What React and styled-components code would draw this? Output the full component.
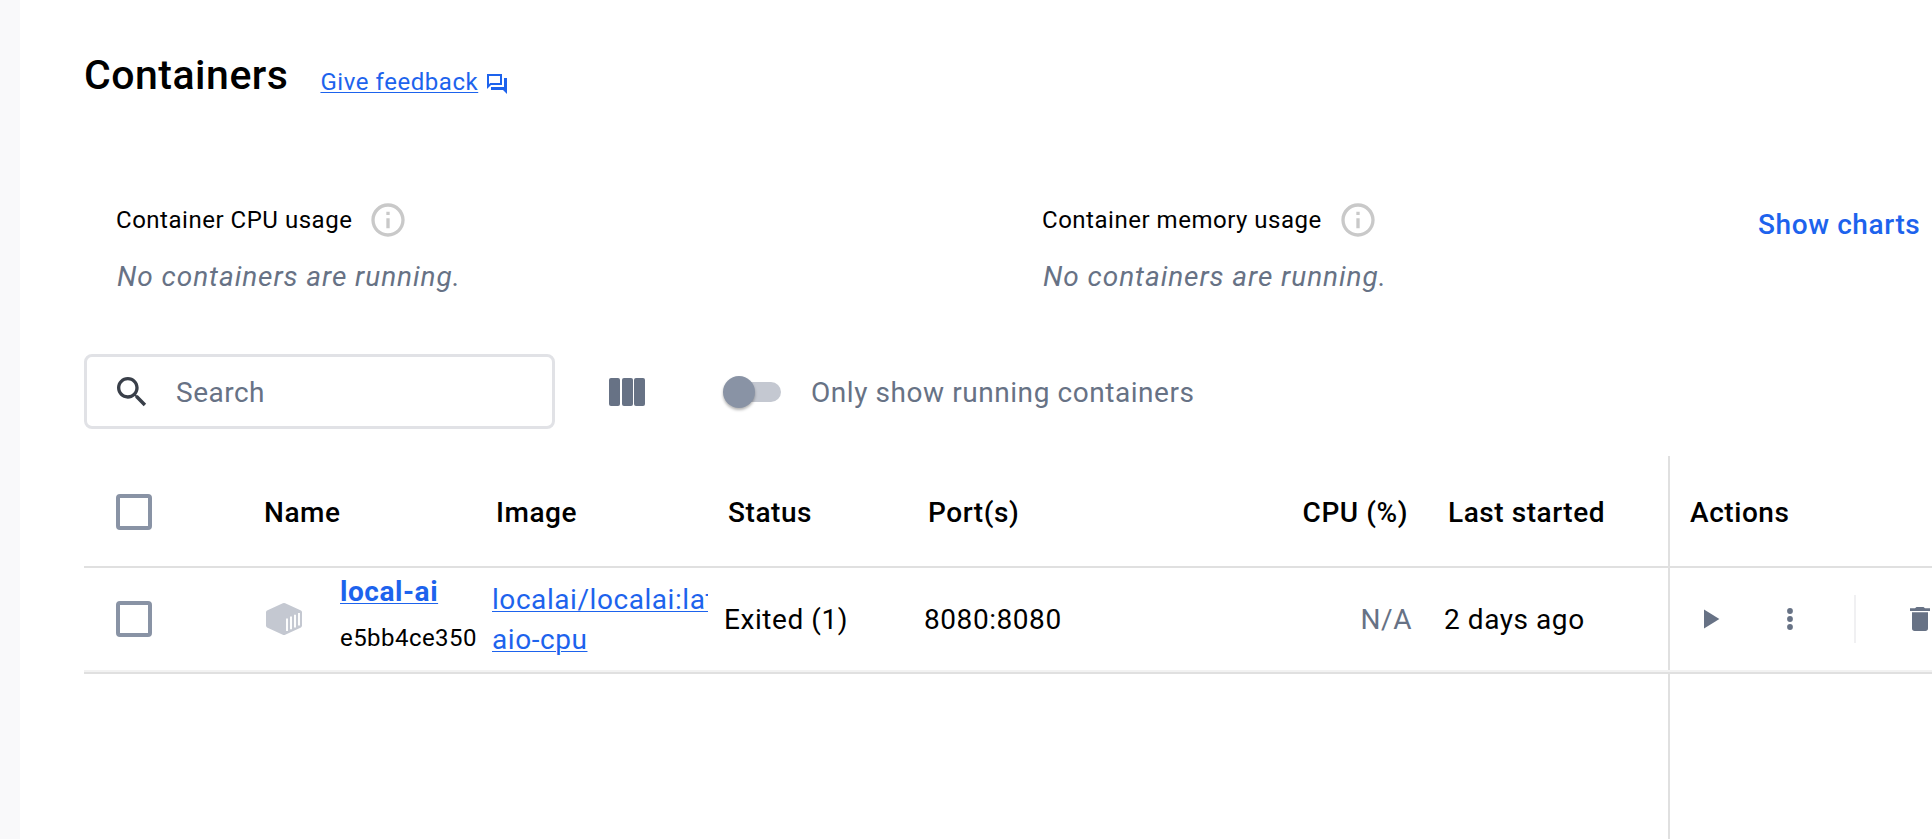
import React from "react";
import styled, { createGlobalStyle } from "styled-components";

const GlobalStyle = createGlobalStyle`
  * { box-sizing: border-box; }
  body { margin: 0; background: #fff; overflow: hidden; }
  svg { flex: none; }
`;

const Page = styled.div`
  display: flex;
  width: 1932px;
  height: 839px;
  overflow: hidden;
  font-family: Roboto, "Liberation Sans", sans-serif;
  font-size: 28px;
  line-height: 40px;
  letter-spacing: 0.56px;
  color: #000;
  background: #fff;
`;

const SideRail = styled.div`
  flex: 0 0 20px;
  background: #f9f9fa;
`;

const Main = styled.main`
  flex: 1;
  min-width: 0;
  display: flex;
  flex-direction: column;
  padding: 46px 0 0 64px;
`;

const Header = styled.header`
  display: flex;
  align-items: flex-start;
  height: 60px;
`;

const Title = styled.h1`
  margin: 0 32px 0 0;
  font-size: 41px;
  font-weight: 500;
  line-height: 58px;
  letter-spacing: 0.5px;
`;

const FeedbackLink = styled.a`
  display: flex;
  align-items: center;
  gap: 7px;
  margin-top: 16px;
  font-size: 24px;
  letter-spacing: 0.55px;
  color: #1d63ed;
  span { text-decoration: underline; text-decoration-thickness: 1px; text-underline-offset: 2px; }
  svg { margin-top: 4px; }
`;

const Stats = styled.section`
  display: flex;
  margin-top: 94px;
  padding-left: 32px;
`;

const Stat = styled.div`
  flex: 0 0 926px;
`;

const StatLabel = styled.div`
  display: flex;
  align-items: center;
  gap: 16px;
  font-size: 24px;
  letter-spacing: 0.52px;
`;

const StatValue = styled.div`
  margin-top: 17px;
  padding-left: 1px;
  font-style: italic;
  letter-spacing: 0.94px;
  color: #677285;
`;

const ChartsButton = styled.button`
  align-self: flex-start;
  margin: 5px 0 0 -210px;
  padding: 0;
  border: 0;
  background: none;
  font: inherit;
  font-weight: 500;
  letter-spacing: 0.6px;
  white-space: nowrap;
  color: #1d63ed;
`;

const Toolbar = styled.div`
  display: flex;
  align-items: center;
  height: 75px;
  margin-top: 57px;
  color: #677285;
`;

const ToolbarText = styled.span`
  padding-top: 2px;
`;

const SearchBox = styled.div`
  display: flex;
  align-items: center;
  gap: 24px;
  width: 471px;
  height: 75px;
  padding-left: 25px;
  border: 3px solid #e1e2e6;
  border-radius: 8px;
  letter-spacing: 0.5px;
`;

const ColumnsButton = styled.div`
  display: flex;
  justify-content: space-between;
  width: 36px;
  margin: 0 78px 0 54px;
`;

const ColumnBar = styled.i`
  width: 11px;
  height: 28px;
  border-radius: 2px;
  background: #677285;
`;

const Switch = styled.div`
  display: flex;
  align-items: center;
  width: 54px;
  height: 20px;
  margin: 0 30px 0 4px;
  border-radius: 10px;
  background: #c4c8d1;
`;

const Thumb = styled.i`
  flex: none;
  width: 32px;
  height: 32px;
  margin-left: -4px;
  border-radius: 50%;
  background: #8993a5;
  box-shadow: 0 2px 3px rgba(0, 0, 0, 0.3);
`;

const Table = styled.div`
  display: flex;
  flex: 1;
  flex-direction: column;
  margin-top: 27px;
`;

const Row = styled.div`
  display: grid;
  grid-template-columns: 161px 231px 232px 200px 320px 200px 240px 264px;
  flex: none;
  height: ${(p) => (p.$head ? 112 : 102)}px;
  font-weight: ${(p) => (p.$head ? 500 : 400)};
  ${(p) => p.$head && "border-bottom: 2px solid #e0e0e0;"}
`;

const Cell = styled.div`
  display: flex;
  align-items: center;
  justify-content: ${(p) => (p.$right ? "flex-end" : "flex-start")};
  min-width: 0;
  overflow: hidden;
  padding: ${(p) => (p.$head ? 4 : 2)}px ${(p) => (p.$clip ? 0 : p.$head ? 20 : 16)}px 0
    ${(p) => (p.$head ? 20 : 16)}px;
  white-space: nowrap;
  color: ${(p) => (p.$muted ? "#677285" : "inherit")};
`;

const CheckCell = styled(Cell)`
  padding-top: ${(p) => (p.$head ? 2 : 0)}px;
  padding-left: 32px;
`;

const Checkbox = styled.i`
  width: 36px;
  height: 36px;
  border: 4px solid #8993a5;
  border-radius: 4px;
`;

const NameHeadCell = styled(Cell)`
  padding-left: 19px;
`;

const ActionsCell = styled(Cell)`
  border-left: 2px solid #e0e0e0;
  padding-right: 0;
`;

const NameCell = styled(Cell)`
  gap: 38px;
  padding-top: 0;
  padding-left: 21px;
  padding-right: 0;
`;

const NameStack = styled.div`
  padding-bottom: 8px;
  line-height: 47px;
`;

const Link = styled.a`
  display: block;
  color: #1d63ed;
  font-weight: ${(p) => (p.$bold ? 700 : 400)};
  text-decoration: underline;
  text-decoration-thickness: 1px;
  text-underline-offset: 2px;
`;

const ContainerId = styled.div`
  font-size: 24px;
  letter-spacing: 0.45px;
`;

const RowActions = styled(ActionsCell)`
  padding-top: 0;
  padding-left: 34px;
`;

const Separator = styled.i`
  width: 2px;
  height: 48px;
  margin: 0 54px 0 61px;
  background: #f0f0f2;
`;

const RowEnd = styled.div`
  flex: none;
  height: 4px;
  border-top: 2px solid #f2f2f2;
  border-bottom: 2px solid #e0e0e0;
`;

const Filler = styled.div`
  flex: 1;
  margin-left: 1584px;
  border-left: 2px solid #e0e0e0;
`;

const MoreGlyph = styled.svg`
  margin-left: 67px;
`;

const InfoIcon = () => (
  <svg width="40" height="40" viewBox="0 0 24 24" fill="#c9c9c9">
    <path d="M11 7h2v2h-2zm0 4h2v6h-2zm1-9C6.48 2 2 6.48 2 12s4.480 10 10 10 10-4.480 10-10S17.520 2 12 2zm0 18c-4.410 0-8-3.590-8-8s3.590-8 8-8 8 3.590 8 8-3.590 8-8 8z" />
  </svg>
);

const FeedbackIcon = () => (
  <svg width="24" height="24" viewBox="0 0 24 24" fill="currentColor">
    <path d="M15 4v7H5.170L4 12.170V4h11m2-2H2v15l4-4h11V2zm5 4h-3v9H6v3h12l4 4V6z" />
  </svg>
);

const SearchIcon = () => (
  <svg width="40" height="40" viewBox="0 0 24 24" fill="#393f49">
    <path d="M15.500 14h-.790l-.280-.270C15.410 12.590 16 11.110 16 9.500 16 5.910 13.090 3 9.500 3S3 5.910 3 9.500 5.910 16 9.500 16c1.610 0 3.090-.590 4.230-1.570l.270.280v.790l5 4.990L20.490 19l-4.990-5zm-6 0C7.010 14 5 11.990 5 9.500S7.010 5 9.500 5 14 7.010 14 9.500 11.990 14 9.500 14z" />
  </svg>
);

const BoxIcon = () => (
  <svg width="36" height="34" viewBox="0 0 36 34">
    <path d="M16.800 1.300Q18 .7 19.200 1.300L35 8.600Q36 9.200 36 10.500V23.500Q36 24.800 35 25.400L19.200 32.700Q18 33.300 16.800 32.700L1 25.400Q0 24.800 0 23.500V10.500Q0 9.200 1 8.600Z" fill="#c4c8d1" />
    <path d="M21 16.500V29M25 14.500V27.200M29 12.700V25.400M33 11V23.600" stroke="#fff" strokeWidth="1.900" />
  </svg>
);

const PlayIcon = () => (
  <svg width="16" height="20" viewBox="0 0 16 20" fill="#677285">
    <path d="M0 .4v19.200L15.400 10z" />
  </svg>
);

const MoreIcon = () => (
  <MoreGlyph width="6" height="24" viewBox="0 0 6 24" fill="#677285">
    <circle cx="3" cy="4" r="2.900" />
    <circle cx="3" cy="12" r="2.900" />
    <circle cx="3" cy="20" r="2.900" />
  </MoreGlyph>
);

const TrashIcon = () => (
  <svg width="20" height="24" viewBox="0 0 20 24" fill="#677285">
    <path d="M2 5.300h16V21.300q0 2.700-2.700 2.700H4.700Q2 24 2 21.300zM0 1.300h5L6.500 0h7L15 1.300h5V4H0z" />
  </svg>
);

export default function App() {
  return (
    <Page>
      <GlobalStyle />
      <SideRail />
      <Main>
        <Header>
          <Title>Containers</Title>
          <FeedbackLink>
            <span>Give feedback</span>
            <FeedbackIcon />
          </FeedbackLink>
        </Header>
        <Stats>
          <Stat>
            <StatLabel>Container CPU usage <InfoIcon /></StatLabel>
            <StatValue>No containers are running.</StatValue>
          </Stat>
          <Stat>
            <StatLabel>Container memory usage <InfoIcon /></StatLabel>
            <StatValue>No containers are running.</StatValue>
          </Stat>
          <ChartsButton>Show charts</ChartsButton>
        </Stats>
        <Toolbar>
          <SearchBox>
            <SearchIcon />
            <ToolbarText>Search</ToolbarText>
          </SearchBox>
          <ColumnsButton>
            <ColumnBar />
            <ColumnBar />
            <ColumnBar />
          </ColumnsButton>
          <Switch><Thumb /></Switch>
          <ToolbarText>Only show running containers</ToolbarText>
        </Toolbar>
        <Table>
          <Row $head>
            <CheckCell $head><Checkbox /></CheckCell>
            <NameHeadCell $head>Name</NameHeadCell>
            <Cell $head>Image</Cell>
            <Cell $head>Status</Cell>
            <Cell $head>Port(s)</Cell>
            <Cell $head $right>CPU (%)</Cell>
            <Cell $head>Last started</Cell>
            <ActionsCell $head>Actions</ActionsCell>
          </Row>
          <Row>
            <CheckCell><Checkbox /></CheckCell>
            <NameCell>
              <BoxIcon />
              <NameStack>
                <Link $bold>local-ai</Link>
                <ContainerId>e5bb4ce350</ContainerId>
              </NameStack>
            </NameCell>
            <Cell $clip>
              <div>
                <Link>localai/localai:latest-</Link>
                <Link>aio-cpu</Link>
              </div>
            </Cell>
            <Cell>Exited (1)</Cell>
            <Cell>8080:8080</Cell>
            <Cell $right $muted>N/A</Cell>
            <Cell>2 days ago</Cell>
            <RowActions>
              <PlayIcon />
              <MoreIcon />
              <Separator />
              <TrashIcon />
            </RowActions>
          </Row>
          <RowEnd />
          <Filler />
        </Table>
      </Main>
    </Page>
  );
}
